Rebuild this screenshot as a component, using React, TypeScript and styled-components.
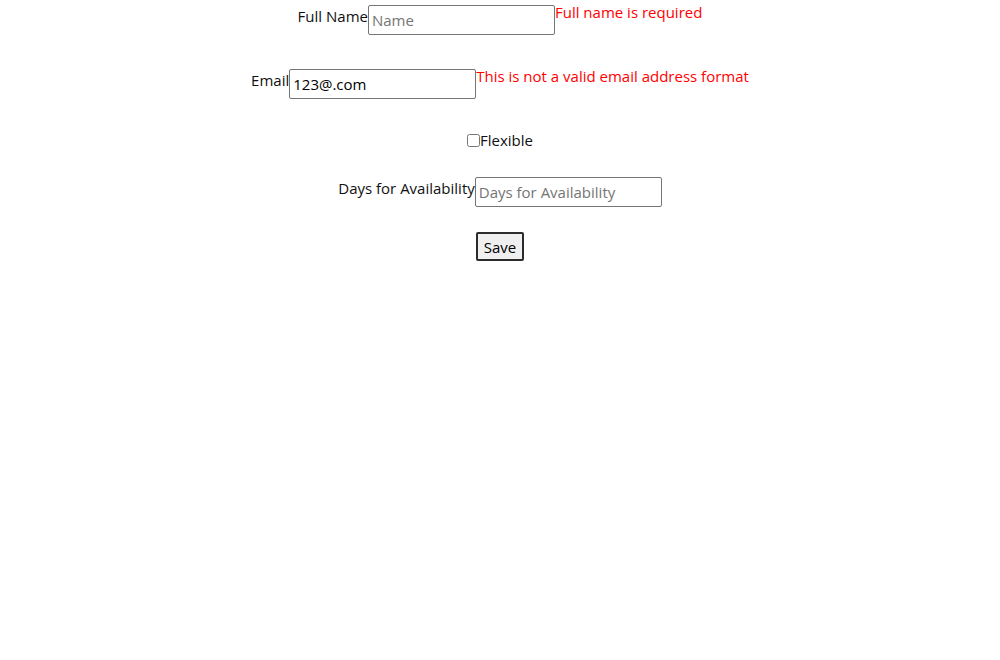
import React from "react";
import styled, { createGlobalStyle } from "styled-components";

const Global = createGlobalStyle`
  html, body { margin: 0; padding: 0; background: #ffffff; }
  body { font-family: "Open Sans", "Noto Sans", sans-serif; font-size: 15px; color: #111; }
`;

const Form = styled.form`
  display: flex;
  flex-direction: column;
  align-items: stretch;
  padding-top: 5px;
`;

const Row = styled.div<{ $mb: number; $center?: boolean }>`
  display: flex;
  justify-content: center;
  align-items: ${(p) => (p.$center ? "center" : "flex-start")};
  margin-bottom: ${(p) => p.$mb}px;
  min-height: 22px;
`;

const Label = styled.label`
  line-height: 22px;
  white-space: nowrap;
`;

const Input = styled.input`
  box-sizing: border-box;
  width: 187px;
  height: 30px;
  border: 1px solid #767676;
  border-radius: 2px;
  padding: 1px 3px;
  font-family: "Open Sans", "Noto Sans", sans-serif;
  font-size: 15px;
  color: #000;
  background: #fff;
  &::placeholder { color: #757575; }
`;

const ErrorText = styled.span`
  color: #ff0000;
  line-height: 22px;
  margin-top: -4px;
  white-space: nowrap;
`;

const Check = styled.input`
  width: 13px;
  height: 13px;
  margin: 0;
`;

const Button = styled.button`
  box-sizing: border-box;
  width: 48px;
  height: 29px;
  border: 2px solid #2b2b2b;
  border-radius: 2px;
  background: #efefef;
  font-family: "Open Sans", "Noto Sans", sans-serif;
  font-size: 15px;
  color: #000;
  padding: 0;
`;

export default function App() {
  return (
    <>
      <Global />
      <Form onSubmit={(e) => e.preventDefault()}>
        <Row $mb={34}>
          <Label htmlFor="fullName">Full Name</Label>
          <Input id="fullName" placeholder="Name" />
          <ErrorText>Full name is required</ErrorText>
        </Row>
        <Row $mb={30}>
          <Label htmlFor="email">Email</Label>
          <Input id="email" defaultValue="123@.com" />
          <ErrorText>This is not a valid email address format</ErrorText>
        </Row>
        <Row $mb={26} $center>
          <Check type="checkbox" id="flexible" />
          <Label htmlFor="flexible">Flexible</Label>
        </Row>
        <Row $mb={25}>
          <Label htmlFor="days">Days for Availability</Label>
          <Input id="days" placeholder="Days for Availability" />
        </Row>
        <Row $mb={0}>
          <Button type="submit">Save</Button>
        </Row>
      </Form>
    </>
  );
}
